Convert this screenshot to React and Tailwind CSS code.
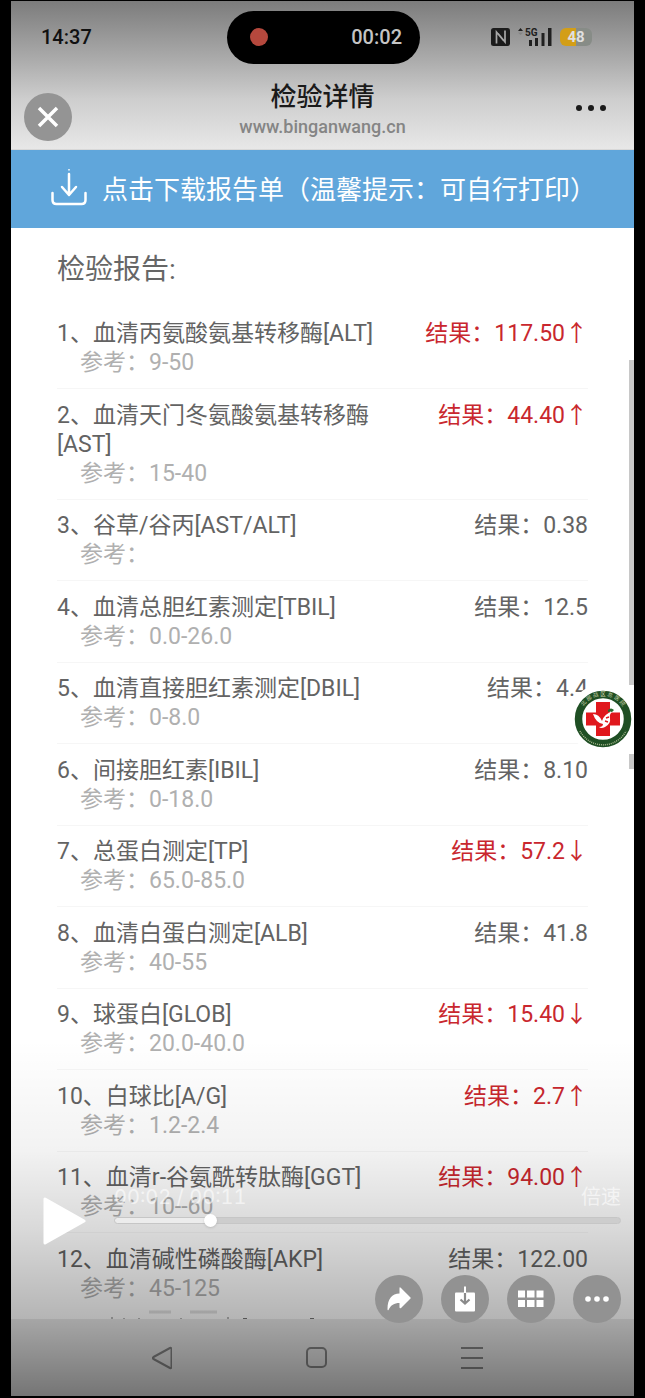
import React from "react";

const FONT = "font-['Roboto','Noto_Sans_CJK_SC',sans-serif]";

const results = [
  { name: "血清丙氨酸氨基转移酶[ALT]", range: "9-50", value: "117.50", flag: "↑" },
  { name: "血清天门冬氨酸氨基转移酶[AST]", range: "15-40", value: "44.40", flag: "↑" },
  { name: "谷草/谷丙[AST/ALT]", range: "", value: "0.38" },
  { name: "血清总胆红素测定[TBIL]", range: "0.0-26.0", value: "12.5" },
  { name: "血清直接胆红素测定[DBIL]", range: "0-8.0", value: "4.4" },
  { name: "间接胆红素[IBIL]", range: "0-18.0", value: "8.10" },
  { name: "总蛋白测定[TP]", range: "65.0-85.0", value: "57.2", flag: "↓" },
  { name: "血清白蛋白测定[ALB]", range: "40-55", value: "41.8" },
  { name: "球蛋白[GLOB]", range: "20.0-40.0", value: "15.40", flag: "↓" },
  { name: "白球比[A/G]", range: "1.2-2.4", value: "2.7", flag: "↑" },
  { name: "血清r-谷氨酰转肽酶[GGT]", range: "10--60", value: "94.00", flag: "↑" },
  { name: "血清碱性磷酸酶[AKP]", range: "45-125", value: "122.00" },
];

function StatusBar() {
  return (
    <div className="flex h-[72px] items-center justify-between pl-[30px] pr-[42px]">
      <span className="w-[186px] text-[20px] font-medium leading-6 text-[#111]">14:37</span>
      <div className="flex h-[53px] w-[193px] items-center justify-between rounded-full bg-black pl-[23px] pr-[18px]">
        <span className="size-[18px] rounded-full bg-[#b5483d]" />
        <span className="text-[20px] font-medium leading-6 text-[#c4c4c4]">00:02</span>
      </div>
      <div className="flex w-[172px] items-center justify-end gap-2">
        <svg className="h-5 w-[19px]" viewBox="0 0 19 20" aria-hidden="true">
          <rect x="0" y="1" width="19" height="18" rx="2.500" fill="#1c1c1c" />
          <path d="M5.500 16.500V5l7 8.500M14 3.500V15L7 6.500" fill="none" stroke="#a8a8a8" strokeWidth="1.700" />
        </svg>
        <svg className="h-5 w-[34px]" viewBox="0 0 34 20" aria-hidden="true">
          <path d="M0 4l2.500-3L5 4zM11 13h3v6h-3zM17 11h3v8h-3zM23.500 6h3v13h-3zM30 1h3.500v18H30z" fill="#202020" />
          <path d="M0 5.500h5L2.500 8z" fill="#858585" />
          <text x="7" y="9" fontSize="10" fontWeight="700" fill="#202020">5G</text>
        </svg>
        <span className="flex h-[18px] w-8 items-center justify-center rounded-[6px] bg-[linear-gradient(90deg,#d39e17_50%,#878c87_50%)] text-[15px] font-bold leading-4 text-[#e0e0e0]">
          48
        </span>
      </div>
    </div>
  );
}

function TitleBar() {
  return (
    <div className="relative flex h-[77px] flex-col items-center border-b border-[#d8d8d8] pt-2">
      <h1 className="text-[26px] font-medium leading-8 text-[#1a1a1a]">检验详情</h1>
      <p className="text-[18px] font-medium leading-7 text-[#858585]">www.binganwang.cn</p>
      <button aria-label="菜单" className="absolute right-7 top-8 flex gap-[6px]">
        <i className="size-[6px] rounded-full bg-[#1a1a1a]" />
        <i className="size-[6px] rounded-full bg-[#1a1a1a]" />
        <i className="size-[6px] rounded-full bg-[#1a1a1a]" />
      </button>
    </div>
  );
}

function Row({ index, item }) {
  return (
    <li className="flex items-start justify-between border-b border-[#f6f6f6] pb-[11px] text-[23px] leading-[29px] text-[#636363] last:border-0 last:pb-0">
      <div className="w-[324px]">
        <p className="break-words">{`${index}、${item.name}`}</p>
        <p className="pl-[23px] text-[#b0b0b0]">{`参考：${item.range}`}</p>
      </div>
      <p className={item.flag ? "whitespace-nowrap text-[#c9272e]" : "whitespace-nowrap"}>
        {`结果：${item.value}${item.flag ?? ""}`}
      </p>
    </li>
  );
}

function HospitalBadge() {
  return (
    <svg className="absolute right-[-4px] top-[683px] size-[70px]" viewBox="-35 -35 70 70" role="img" aria-label="医院">
      <defs>
        <path id="ringTop" d="M-22.500 7A23.500 23.500 0 1 1 22.500 7" />
        <path id="ringBottom" d="M-25.500 5A26 26 0 0 0 25.500 5" />
      </defs>
      <circle r="35" fill="#fff" />
      <circle r="24.500" fill="none" stroke="#1f4f24" strokeWidth="7.500" />
      <text fontSize="5.500" fill="#c9d3a8" textAnchor="middle">
        <textPath href="#ringTop" startOffset="50%">北 部 战 区 总 医 院</textPath>
      </text>
      <path d="M-23 12A26 26 0 0 0 23 12" fill="none" stroke="#a9b98f" strokeWidth="1.500" strokeDasharray="1 1" />
      <path d="M-7-17H7v10.500h10V6.500H7V17H-7V6.500H-17V-6.500H-7z" fill="#e0181d" />
      <path d="M-10-5Q-4-5-1 2Q1-5 10-8Q6-5 7-1Q8 5 2 8Q-2 10-4 8Q0 8 0 5Q-7 4-10-5z" fill="#fff" />
      <path d="M3-1l3-1M2 2l3 1" stroke="#e0181d" strokeWidth="1.500" />
      <path d="M5-9q3-3 6 0l-2 2q-2-1-4 0z" fill="#276a2d" />
    </svg>
  );
}

function RoundButton({ label, children }) {
  return (
    <button aria-label={label} className="flex size-12 items-center justify-center rounded-full bg-[#929292]">
      <svg className="size-7" viewBox="0 0 28 28" fill="#fff" aria-hidden="true">{children}</svg>
    </button>
  );
}

function PlayerControls() {
  return (
    <div className="absolute inset-x-0 bottom-[73px] z-20 flex flex-col gap-[30px] pl-8 pr-[13px]">
      <div className="flex h-12 items-start gap-7">
        <button aria-label="播放" className="h-12 w-[43px] shrink-0">
          <svg className="h-12 w-[43px]" viewBox="0 0 43 48" aria-hidden="true">
            <path d="M2 2v44L41 24z" fill="#fff" stroke="#fff" strokeWidth="3" strokeLinejoin="round" />
          </svg>
        </button>
        <div className="-mt-3 flex grow flex-col">
          <div className="flex items-center justify-between text-[20px] leading-6 text-white/60">
            <span className="font-['Inter',sans-serif] tabular-nums">00:02 / 00:11</span>
            <button>倍速</button>
          </div>
          <input
            type="range"
            aria-label="进度"
            min="0"
            max="11"
            defaultValue="2"
            className="mt-2 h-[7px] w-full appearance-none rounded-full border border-[#c6c6c6] bg-[linear-gradient(90deg,#ececec_19%,#cdcdcd_19%)] [&::-webkit-slider-thumb]:size-[13px] [&::-webkit-slider-thumb]:appearance-none [&::-webkit-slider-thumb]:rounded-full [&::-webkit-slider-thumb]:bg-white [&::-webkit-slider-thumb]:shadow"
          />
        </div>
      </div>
      <div className="flex justify-end gap-[18px]">
        <RoundButton label="分享">
          <path d="M14.500 3.500Q14.500 1.500 16 3L25.500 12.500Q26 13 25.500 13.500L16 23Q14.500 24 14.500 22V18C9 18 6 20 3.500 25Q2.500 26 2.500 24C2.500 14 7 8.500 14.500 8.500z" />
        </RoundButton>
        <RoundButton label="保存">
          <rect x="4" y="7.500" width="20" height="19" rx="1" />
          <path d="M14 8v10.500M9.500 14.500l4.500 4 4.500-4" fill="none" stroke="#8a8a8a" strokeWidth="2.200" />
          <path d="M13 1.500h2V8h-2z" />
        </RoundButton>
        <RoundButton label="列表">
          <path d="M1 5.500h7v7H1zM10 5.500h7.500v7H10zM19.500 5.500h7v7h-7zM1 15h7v7H1zM10 15h7.500v7H10zM19.500 15h7v7h-7z" />
        </RoundButton>
        <RoundButton label="更多">
          <circle cx="5" cy="14" r="2.800" />
          <circle cx="14" cy="14" r="2.800" />
          <circle cx="23" cy="14" r="2.800" />
        </RoundButton>
      </div>
    </div>
  );
}

export default function App() {
  return (
    <div className={`min-h-screen bg-black px-[11px] pb-[2px] pt-px ${FONT}`}>
      <div className="relative flex min-h-[calc(100vh-3px)] flex-col overflow-hidden bg-white">
        <header className="bg-[linear-gradient(#7c7c7c,#acacac_40%,#cecece_66%,#e8e8e8)]">
          <StatusBar />
          <TitleBar />
        </header>
        <button className="flex h-[78px] items-center gap-[15px] bg-[#60a6db] pl-10 text-[26px] text-white">
          <svg className="h-10 w-9 shrink-0" viewBox="0 0 36 40" fill="none" stroke="#fff" strokeWidth="2.500" strokeLinecap="round" strokeLinejoin="round" aria-hidden="true">
            <path d="M1.500 24v7q0 4 4 4h25q4 0 4-4v-7M18 5v20M11 18l7 8 7-8" />
            <path d="M18 .500v.500" strokeWidth="1.500" />
          </svg>
          <span className="whitespace-nowrap pt-[2px]">点击下载报告单（温馨提示：可自行打印）</span>
        </button>
        <main className="flex grow flex-col px-[46px]">
          <h2 className="pt-6 text-[28px] leading-9 text-[#666]">检验报告:</h2>
          <ol className="mt-[31px] flex grow flex-col justify-between">
            {results.map((item, i) => (
              <Row key={item.name} index={i + 1} item={item} />
            ))}
          </ol>
          <svg className="h-4 w-[280px]" viewBox="0 0 280 16" fill="none" stroke="#777" aria-hidden="true">
            <path d="M55 14v2M67 15v1M82 15v1M124 15v1M171 14v2M186 15.500h4M253 15.500h4" />
            <path d="M92 9h22M133 9h27" stroke="#e2e2e2" strokeWidth="3" />
          </svg>
        </main>
        <nav className="flex h-[77px] items-center justify-between bg-[#ebebeb] pl-[141px] pr-[151px]">
          <button aria-label="返回">
            <svg className="h-6 w-5" viewBox="1 0 20 24" fill="none" stroke="#888" strokeWidth="2" strokeLinejoin="round" aria-hidden="true">
              <path d="M2.500 11L19 2q1.500-.500 1.500 1v18q0 1.500-1.500 1L2.500 13q-1.500-1 0-2z" />
            </svg>
          </button>
          <button aria-label="主页" className="size-[21px] rounded-[5px] border-2 border-[#888]" />
          <button aria-label="最近任务" className="flex w-[22px] flex-col gap-2">
            <i className="h-[2px] bg-[#888]" />
            <i className="h-[2px] bg-[#888]" />
            <i className="h-[2px] bg-[#888]" />
          </button>
        </nav>
        <HospitalBadge />
        <span className="absolute right-0 top-[359px] h-[325px] w-[5px] bg-[#c8c8c8]" />
        <span className="absolute right-0 top-[753px] h-[15px] w-[5px] bg-[#c8c8c8]" />
        <div className="pointer-events-none absolute inset-x-0 bottom-0 z-10 h-[356px] bg-[linear-gradient(rgba(0,0,0,0),rgba(0,0,0,0.05)_31%,rgba(0,0,0,0.15)_53%,rgba(0,0,0,0.29)_78%,rgba(0,0,0,0.5))]" />
        <button aria-label="关闭" className="absolute left-[13px] top-[92px] z-20 flex size-12 items-center justify-center rounded-full bg-[#949494]">
          <svg className="size-6" viewBox="0 0 24 24" stroke="#fff" strokeWidth="3.500" aria-hidden="true">
            <path d="M3 3l18 18M21 3L3 21" />
          </svg>
        </button>
        <PlayerControls />
      </div>
    </div>
  );
}
